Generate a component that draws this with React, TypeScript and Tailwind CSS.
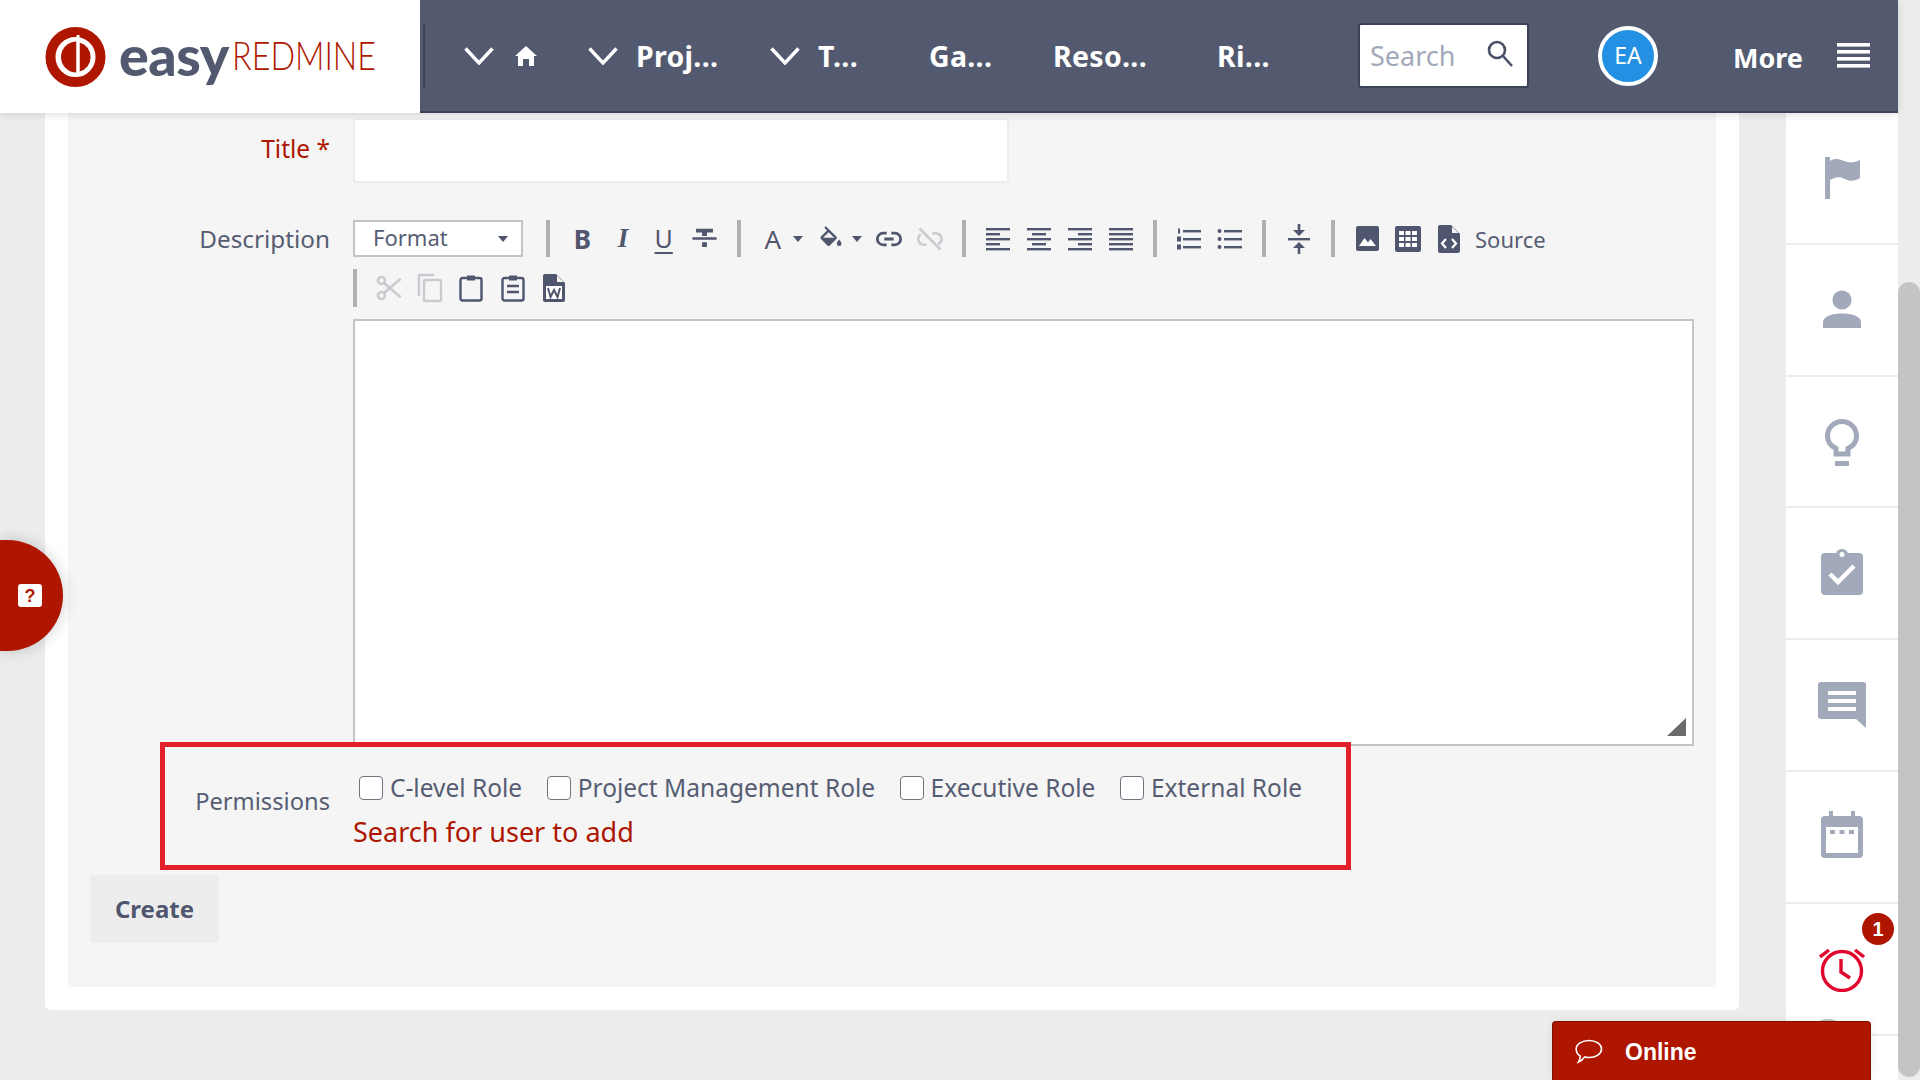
const ink = "#4f566d";
const mute = "#c9cbd0";

function Sep() {
  return <span className="mx-[12px] h-[37px] w-[4px] shrink-0 bg-[#b0b0b0]" />;
}

function Tb({ children, w = "w-[40.7px]" }: { children: React.ReactNode; w?: string }) {
  return <span className={`flex h-[37px] shrink-0 items-center justify-center ${w}`}>{children}</span>;
}

function Caret({ color = ink }: { color?: string }) {
  return (
    <svg width="10" height="6" viewBox="0 0 10 6">
      <path d="M0 0h10L5 6z" fill={color} />
    </svg>
  );
}

function Alignment({ kind }: { kind: "l" | "c" | "r" | "j" }) {
  const rows = [24, 14, 24, 14, 24];
  return (
    <svg width="24" height="24" viewBox="0 0 24 24" fill={ink}>
      {rows.map((w, i) => {
        const width = kind === "j" ? 24 : w;
        const x = kind === "l" || kind === "j" ? 0 : kind === "c" ? (24 - width) / 2 : 24 - width;
        return <rect key={i} x={x} y={1 + i * 5} width={width} height="2.4" />;
      })}
    </svg>
  );
}

function Check({ label }: { label: string }) {
  return (
    <label className="flex items-center">
      <span className="h-[24px] w-[24px] rounded-[4px] border border-[#71757f] bg-white" />
      <span className="ml-[7px] text-[24.5px] leading-[24px] text-[#565d73]">{label}</span>
    </label>
  );
}

function NavChevron() {
  return (
    <svg width="30" height="18" viewBox="0 0 30 18" fill="none" stroke="white" strokeWidth="3.4">
      <path d="M1.5 1.5 15 16 28.5 1.5" />
    </svg>
  );
}

function SideRow({ children }: { children: React.ReactNode }) {
  return (
    <div className="relative flex h-[131.8px] shrink-0 items-center justify-center border-b-2 border-[#ececec]">
      {children}
    </div>
  );
}

export default function App() {
  return (
    <div className="flex h-[1080px] w-[1920px] overflow-hidden bg-[#ededed] font-['Noto_Sans',sans-serif]">
      <div className="relative flex w-[1898px] shrink-0 flex-col">
        {/* header */}
        <header className="relative z-20 flex h-[113px] shrink-0 shadow-[0_2px_8px_rgba(0,0,0,0.12)]">
          <div className="flex w-[420px] shrink-0 items-center bg-white pl-[45px]">
            <svg width="61" height="62" viewBox="0 0 60 62">
              <circle cx="30" cy="31" r="25" fill="none" stroke="#ae1600" strokeWidth="10" />
              <path d="M31 15.500A15.500 15.500 0 0 0 31 46.500z" fill="#ae1600" />
              <path d="M34 16.500A15 15 0 0 1 34 45.500z" fill="#ae1600" />
              <rect x="31" y="9" width="3" height="38" fill="white" />
            </svg>
            <span className="ml-[13px] -translate-y-[2px] font-['Lato',sans-serif] text-[55.5px] leading-none font-black tracking-[-0.5px] text-[#535a70]">easy</span>
            <span className="ml-[3px] origin-left -translate-y-[1px] scale-x-[0.83] font-['Lato',sans-serif] text-[39px] leading-none font-light whitespace-nowrap text-[#ae1600]">REDMINE</span>
          </div>
          <nav className="flex grow items-center border-b-2 border-[#3d4357] bg-[#535a70] text-[28.5px] font-bold tracking-[0.3px] text-white">
            <span className="ml-[3px] h-[65px] w-[2px] bg-[#3d4357]" />
            <span className="ml-[39px]"><NavChevron /></span>
            <svg className="ml-[21px]" width="22" height="20" viewBox="0 0 22 20" fill="white">
              <path d="M11 0 22 10h-3v10h-5v-7H8v7H3V10H0z" />
            </svg>
            <span className="ml-[51px]"><NavChevron /></span>
            <span className="ml-[18px] w-[101px] translate-y-[1px]">Proj...</span>
            <span className="ml-[33px]"><NavChevron /></span>
            <span className="ml-[18px] w-[62px] translate-y-[1px]">T...</span>
            <span className="ml-[49px] w-[81px] translate-y-[1px]">Ga...</span>
            <span className="ml-[43px] w-[120px] translate-y-[1px]">Reso...</span>
            <span className="ml-[44px] w-[80px] translate-y-[1px]">Ri...</span>
            <div className="ml-[61px] flex h-[65px] w-[171px] items-center justify-between rounded-[3px] border-2 border-[#3d4357] bg-white pr-[13px] pl-[10px] text-[27px] font-normal tracking-normal text-[#a3a9ba]">
              <span className="translate-y-[1px]">Search</span>
              <svg className="-translate-y-[2px]" width="27" height="27" viewBox="0 0 27 27" fill="none" stroke="#4a5066" strokeWidth="2.6">
                <circle cx="10" cy="10" r="8" />
                <path d="m16 16 9 10" />
              </svg>
            </div>
            <div className="ml-[69px] flex h-[60px] w-[60px] items-center justify-center rounded-full border-[4px] border-white bg-[#2490e3] text-[23px] font-normal tracking-normal">EA</div>
            <span className="ml-[75px] translate-y-[3px] text-[27px] tracking-normal">More</span>
            <svg className="ml-[34px]" width="33" height="25" viewBox="0 0 33 25" fill="white">
              <rect y="0" width="33" height="3.6" />
              <rect y="7" width="33" height="3.6" />
              <rect y="14" width="33" height="3.6" />
              <rect y="21" width="33" height="3.6" />
            </svg>
          </nav>
        </header>

        <div className="flex min-h-0 grow">
          {/* main card */}
          <main className="ml-[45px] h-[897px] w-[1694px] shrink-0 rounded-b-[6px] bg-white px-[23px] pb-[23px]">
            <div className="flex h-full flex-col bg-[#f5f5f5] pt-[5px]">
              <div className="flex items-center">
                <span className="w-[262px] -translate-y-[1px] text-right text-[24.5px] text-[#ae1600]">Title *</span>
                <div className="ml-[23px] h-[65px] w-[656px] rounded-[3px] border-2 border-[#ececec] bg-white" />
              </div>

              <div className="mt-[37px] flex">
                <span className="w-[262px] text-right text-[24.3px] leading-[37px] text-[#565d73]">Description</span>
                <div className="ml-[23px] flex w-[1341px] flex-col">
                  <div className="flex items-center">
                    <div className="flex h-[37px] w-[170px] items-center justify-between border-2 border-[#c4c4c4] bg-white pr-[13px] pl-[18px] text-[22px] text-[#565d73]">
                      <span className="-translate-y-[1px]">Format</span>
                      <Caret />
                    </div>
                    <span className="ml-[11px]" />
                    <Sep />
                    <Tb><span className="text-[26px] leading-none font-bold text-[#4f566d]">B</span></Tb>
                    <Tb><span className="font-['Liberation_Serif',serif] text-[27px] leading-none font-bold text-[#4f566d] italic">I</span></Tb>
                    <Tb><span className="text-[25px] leading-none font-normal text-[#4f566d] underline decoration-2 underline-offset-4">U</span></Tb>
                    <Tb>
                      <svg width="29" height="29" viewBox="0 0 24 24" fill={ink}>
                        <path d="M5 4h14v3h-5v3h-4V7H5zM2 11h20v2H2zM10 15h4v4h-4z" />
                      </svg>
                    </Tb>
                    <Sep />
                    <span className="flex w-[40px] items-center justify-center"><span className="text-[26px] leading-none text-[#4f566d]">A</span></span>
                    <Caret />
                    <svg className="ml-[13px]" width="30" height="28" viewBox="0 0 24 24" fill={ink}>
                      <path d="M16.6 9.9 7.6 1 6.2 2.4l2.4 2.4-5.2 5.1a1.5 1.5 0 0 0 0 2.1l5.500 5.500a1.5 1.5 0 0 0 2.1 0l5.600-5.500a1.5 1.5 0 0 0 0-2.1zM5.2 11 10 6.2l4.800 4.800zM19 12.500s-2 2.200-2 3.500a2 2 0 0 0 4 0c0-1.300-2-3.500-2-3.500z" />
                    </svg>
                    <span className="ml-[6px]"><Caret /></span>
                    <span className="ml-[7px]" />
                    <Tb>
                      <svg width="28" height="28" viewBox="0 0 24 24" fill="none" stroke={ink} strokeWidth="2.4">
                        <path d="M10 17H7a5 5 0 0 1 0-10h3M14 7h3a5 5 0 0 1 0 10h-3M8 12h8" />
                      </svg>
                    </Tb>
                    <Tb>
                      <svg width="28" height="28" viewBox="0 0 24 24" fill="none" stroke={mute} strokeWidth="2.2">
                        <path d="M9 17H7a5 5 0 0 1-3-9M14 7h3a5 5 0 0 1 2 9.500M3 3l18 18" />
                      </svg>
                    </Tb>
                    <Sep />
                    <Tb><Alignment kind="l" /></Tb>
                    <Tb><Alignment kind="c" /></Tb>
                    <Tb><Alignment kind="r" /></Tb>
                    <Tb><Alignment kind="j" /></Tb>
                    <Sep />
                    <Tb>
                      <svg width="26" height="24" viewBox="0 0 26 24" fill={ink}>
                        <rect x="7" y="3" width="18" height="2.4" />
                        <rect x="7" y="11" width="18" height="2.4" />
                        <rect x="7" y="19" width="18" height="2.4" />
                        <rect x="2" y="1.500" width="2" height="5" />
                        <rect x="1" y="9.500" width="4" height="5" />
                        <rect x="1" y="17.500" width="4" height="5" />
                      </svg>
                    </Tb>
                    <Tb>
                      <svg width="25" height="24" viewBox="0 0 25 24" fill={ink}>
                        <circle cx="2.500" cy="4" r="2" />
                        <circle cx="2.500" cy="12" r="2" />
                        <circle cx="2.500" cy="20" r="2" />
                        <rect x="7" y="3" width="18" height="2.400" />
                        <rect x="7" y="11" width="18" height="2.400" />
                        <rect x="7" y="19" width="18" height="2.400" />
                      </svg>
                    </Tb>
                    <Sep />
                    <Tb>
                      <svg width="22" height="32" viewBox="0 0 22 32" fill={ink}>
                        <rect x="0" y="15" width="22" height="2.4" />
                        <rect x="9.700" y="1" width="2.600" height="7" />
                        <path d="M5 7h12l-6 6z" />
                        <rect x="9.700" y="24" width="2.600" height="7" />
                        <path d="M5 25h12l-6-6z" />
                      </svg>
                    </Tb>
                    <Sep />
                    <Tb>
                      <svg width="23" height="25" viewBox="0 0 23 25">
                        <rect width="23" height="25" rx="2" fill={ink} />
                        <path d="M3 20l5.500-8 3.500 4.500L14.500 13l5.500 7z" fill="white" />
                      </svg>
                    </Tb>
                    <Tb>
                      <svg width="26" height="26" viewBox="0 0 26 26">
                        <rect width="26" height="26" rx="2" fill={ink} />
                        <path d="M4 5h5v4H4zM10.500 5h5v4h-5zM17 5h5v4h-5zM4 11h5v4H4zM10.500 11h5v4h-5zM17 11h5v4h-5zM4 17h5v4H4zM10.500 17h5v4h-5zM17 17h5v4h-5z" fill="white" />
                      </svg>
                    </Tb>
                    <Tb>
                      <svg width="22" height="28" viewBox="0 0 22 28">
                        <path d="M2 0h11l9 9v17a2 2 0 0 1-2 2H2a2 2 0 0 1-2-2V2a2 2 0 0 1 2-2z" fill={ink} />
                        <path d="M14 1.500 20.500 8H14z" fill="#f5f5f5" />
                        <path d="M8 14l-4 4.500L8 23M14 14l4 4.500-4 4.500" fill="none" stroke="white" strokeWidth="2.200" />
                      </svg>
                    </Tb>
                    <span className="ml-[6px] text-[22px] leading-none text-[#565d73]">Source</span>
                  </div>

                  <div className="mt-[12px] flex h-[38px] items-center">
                    <span className="h-[38px] w-[4px] bg-[#b0b0b0]" />
                    <span className="w-[11px]" />
                    <Tb w="w-[41.4px]">
                      <svg width="28" height="28" viewBox="0 0 24 24" fill="none" stroke={mute} strokeWidth="2.200">
                        <circle cx="5.500" cy="5.500" r="3" />
                        <circle cx="5.500" cy="18.500" r="3" />
                        <path d="M8 8l14 12M8 16 22 4" />
                      </svg>
                    </Tb>
                    <Tb w="w-[41.4px]">
                      <svg width="26" height="30" viewBox="0 0 26 30" fill="none" stroke={mute} strokeWidth="2.400">
                        <path d="M17 2H2v21" />
                        <rect x="7" y="7" width="17" height="21" rx="1" />
                      </svg>
                    </Tb>
                    <Tb w="w-[41.4px]">
                      <svg width="24" height="28" viewBox="0 0 24 28" fill="none" stroke={ink} strokeWidth="2.400">
                        <rect x="1.500" y="4" width="21" height="22.500" rx="2" />
                        <path d="M8 4h8" strokeWidth="5" />
                      </svg>
                    </Tb>
                    <Tb w="w-[41.4px]">
                      <svg width="24" height="28" viewBox="0 0 24 28" fill="none" stroke={ink} strokeWidth="2.400">
                        <rect x="1.500" y="4" width="21" height="22.500" rx="2" />
                        <path d="M8 4h8" strokeWidth="5" />
                        <path d="M6 12h12M6 18h12" />
                      </svg>
                    </Tb>
                    <Tb w="w-[41.4px]">
                      <svg width="22" height="28" viewBox="0 0 22 28">
                        <path d="M2 0h11l9 9v17a2 2 0 0 1-2 2H2a2 2 0 0 1-2-2V2a2 2 0 0 1 2-2z" fill={ink} />
                        <path d="M14 1.500 20.500 8H14z" fill="#f5f5f5" />
                        <rect x="3" y="12" width="16" height="13" fill="white" />
                        <path d="M5 14l2.500 9L11 16l3.500 7L17 14" fill="none" stroke={ink} strokeWidth="2" />
                      </svg>
                    </Tb>
                  </div>

                  <div className="relative mt-[12px] h-[427px] w-[1341px] border-2 border-[#c4c4c4] bg-white">
                    <svg className="absolute right-[6px] bottom-[8px]" width="19" height="18" viewBox="0 0 19 18">
                      <path d="M19 0v18H0z" fill="#6b6b6b" />
                    </svg>
                  </div>
                </div>
              </div>

              {/* permissions, highlighted */}
              <div className="relative z-10 -mt-[4px] ml-[92px] h-[128px] w-[1191px] border-[5px] border-[#e2202c] bg-[#f5f5f5]">
                <div className="flex h-full">
                  <span className="w-[165px] pt-[39px] text-right text-[23.7px] leading-[30px] text-[#565d73]">Permissions</span>
                  <div className="flex flex-col pt-[29px]">
                    <div className="ml-[29px] flex gap-[24.5px]">
                      <Check label="C-level Role" />
                      <Check label="Project Management Role" />
                      <Check label="Executive Role" />
                      <Check label="External Role" />
                    </div>
                    <span className="mt-[16px] ml-[23px] text-[27px] leading-[32px] text-[#ae1600]">Search for user to add</span>
                  </div>
                </div>
              </div>

              <button className="mt-[5px] ml-[22px] flex h-[68px] w-[129px] items-center justify-center rounded-[4px] bg-[#ededed] text-[24px] font-bold text-[#4f566d]">
                Create
              </button>
            </div>
          </main>

          {/* right rail */}
          <aside className="ml-[47px] flex w-[112px] shrink-0 flex-col overflow-hidden bg-white">
            <SideRow>
              <svg className="translate-x-[1px]" width="38" height="42" viewBox="0 0 38 42" fill="#a2a9bb">
                <path d="M1 0h5v42H1z" />
                <path d="M6 4c5-3 9-2 14 0s10 2 16-1v18c-5 3-10 4-15 1s-10-2-15 1z" />
              </svg>
            </SideRow>
            <SideRow>
              <svg className="-translate-y-[1px]" width="38" height="38" viewBox="0 0 38 38" fill="#a2a9bb">
                <circle cx="19" cy="10" r="9.600" />
                <path d="M0 38v-6c0-6 10-8.500 19-8.500S38 26 38 32v6z" />
              </svg>
            </SideRow>
            <SideRow>
              <svg className="translate-y-[1px]" width="34" height="47" viewBox="0 0 34 47" fill="none" stroke="#a2a9bb" strokeWidth="5">
                <path d="M11 35v-5.500C6 27 2.500 22.500 2.500 17a14.500 14.500 0 0 1 29 0c0 5.500-3.500 10-8.500 12.500V35z" />
                <path d="M10 44.500h14" />
              </svg>
            </SideRow>
            <SideRow>
              <svg className="-translate-y-[2px]" width="42" height="47" viewBox="0 0 42 47">
                <path d="M4 5h11a6.500 6.500 0 0 1 12 0h11a4 4 0 0 1 4 4v34a4 4 0 0 1-4 4H4a4 4 0 0 1-4-4V9a4 4 0 0 1 4-4z" fill="#a2a9bb" />
                <circle cx="21" cy="6.500" r="2.500" fill="white" />
                <path d="m9 26 8 8 16-16" fill="none" stroke="white" strokeWidth="4.500" />
              </svg>
            </SideRow>
            <SideRow>
              <svg width="48" height="46" viewBox="0 0 48 46">
                <path d="M3 0h42a3 3 0 0 1 3 3v43l-10-9H3a3 3 0 0 1-3-3V3a3 3 0 0 1 3-3z" fill="#a2a9bb" />
                <path d="M10 9h28v4H10zM10 17h28v4H10zM10 25h28v4H10z" fill="white" />
              </svg>
            </SideRow>
            <SideRow>
              <svg className="-translate-y-[2px]" width="42" height="47" viewBox="0 0 42 47">
                <path d="M8 0h4v5h18V0h4v5h4a4 4 0 0 1 4 4v34a4 4 0 0 1-4 4H4a4 4 0 0 1-4-4V9a4 4 0 0 1 4-4h4z" fill="#a2a9bb" />
                <path d="M5 16h32v26H5z" fill="white" />
                <path d="M9 19h5v4H9zM18.500 19h5v4h-5zM28 19h5v4h-5z" fill="#a2a9bb" />
              </svg>
            </SideRow>
            <SideRow>
              <span className="absolute top-[9px] right-[4px] flex h-[32px] w-[32px] items-center justify-center rounded-full bg-[#ae1600] font-['Liberation_Sans',sans-serif] text-[20px] font-bold text-white">1</span>
              <svg width="46" height="46" viewBox="0 0 46 46" fill="none" stroke="#e0062e" strokeWidth="3.400">
                <circle cx="23" cy="25" r="19.500" />
                <path d="M22 13v13l9 6M1 11l9-7M45 11l-9-7" />
              </svg>
            </SideRow>
            <div className="ml-[22px] h-[40px] w-[40px] -translate-y-[17px] rounded-full border-2 border-[#c4c4c4]" />
          </aside>
        </div>

        {/* help tab */}
        <div className="absolute top-[540px] left-0 z-10 flex h-[111px] w-[63px] items-center justify-end rounded-r-full bg-[#ae1600] pr-[21px] shadow-[0_0_16px_rgba(0,0,0,0.2)]">
          <span className="flex h-[23px] w-[24px] items-center justify-center rounded-[3px] bg-white font-['Liberation_Sans',sans-serif] text-[18px] leading-none font-bold text-[#ae1600]">?</span>
        </div>

        {/* online chat */}
        <div className="absolute top-[1021px] left-[1552px] z-30 flex h-[59px] w-[319px] items-start rounded-t-[4px] border border-b-0 border-[#7d0f00] bg-[#ae1600] pt-[17px] pl-[22px] font-['Liberation_Sans',sans-serif] shadow-[0_0_10px_rgba(0,0,0,0.08)]">
          <svg width="28" height="25" viewBox="0 0 28 25" fill="none" stroke="white" strokeWidth="1.600">
            <path d="M14 1.500c7 0 12.500 3.700 12.500 8.500S21 18.500 14 18.500c-1.500 0-3-.2-4.300-.5-1.500 2-3.700 4-6.200 5 1-1.500 1.700-3.500 1.700-6-2.700-1.500-4-4-4-7C1.200 5.200 7 1.500 14 1.500z" />
          </svg>
          <span className="ml-[22px] text-[23px] leading-[26px] font-bold text-white">Online</span>
        </div>
      </div>

      {/* scrollbar */}
      <div className="flex w-[22px] shrink-0 flex-col bg-[#ededed] pt-[282px] pb-[3px]">
        <div className="grow rounded-full bg-[#c4c4c4]" />
      </div>
    </div>
  );
}
